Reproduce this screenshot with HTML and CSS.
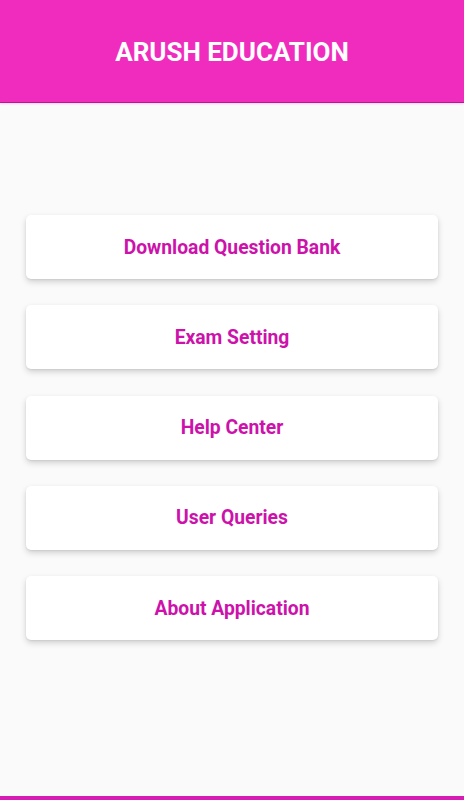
FILE: index.html
```html
<!DOCTYPE html>
<html lang="en">
<head>
  <title>Arush Education</title>
  <link rel="stylesheet" href="styles.css">
</head>
<body>
  <div class="header">ARUSH EDUCATION</div>

  <div class="menu">
    <div class="card">Download Question Bank</div>
    <div class="card">Exam Setting</div>
    <div class="card">Help Center</div>
    <div class="card">User Queries</div>
    <div class="card">About Application</div>
  </div>

  <div class="bottom-bar"></div>
</body>
</html>
```

FILE: styles.css
```css
body {
  font-family: Roboto, "Noto Sans", sans-serif;
  margin: 0;
  padding: 0;
  background-color: #fafafa;
  height: 800px;
  display: flex;
  flex-direction: column;
  overflow: hidden;
}

.header {
  background-color: #f02cbe;
  color: white;
  font-size: 26px;
  font-weight: bold;
  text-align: center;
  height: 102px;
  line-height: 104px;
  border-bottom: 1px solid #b8188f;
  box-shadow: 0 1px 2px rgba(240, 44, 190, 0.2);
}

.menu {
  flex: 1;
  display: flex;
  flex-direction: column;
  gap: 26.25px;
  padding: 112px 26px 0 26px;
}

.card {
  background-color: white;
  height: 64px;
  border-radius: 5px;
  box-shadow: 0 3px 6px rgba(0, 0, 0, 0.16), 0 1px 2px rgba(0, 0, 0, 0.08);
  display: flex;
  align-items: center;
  justify-content: center;
  color: #cc12aa;
  font-size: 19.3px;
  font-weight: bold;
}

.bottom-bar {
  height: 4px;
  background-color: #d61cb2;
}
```
